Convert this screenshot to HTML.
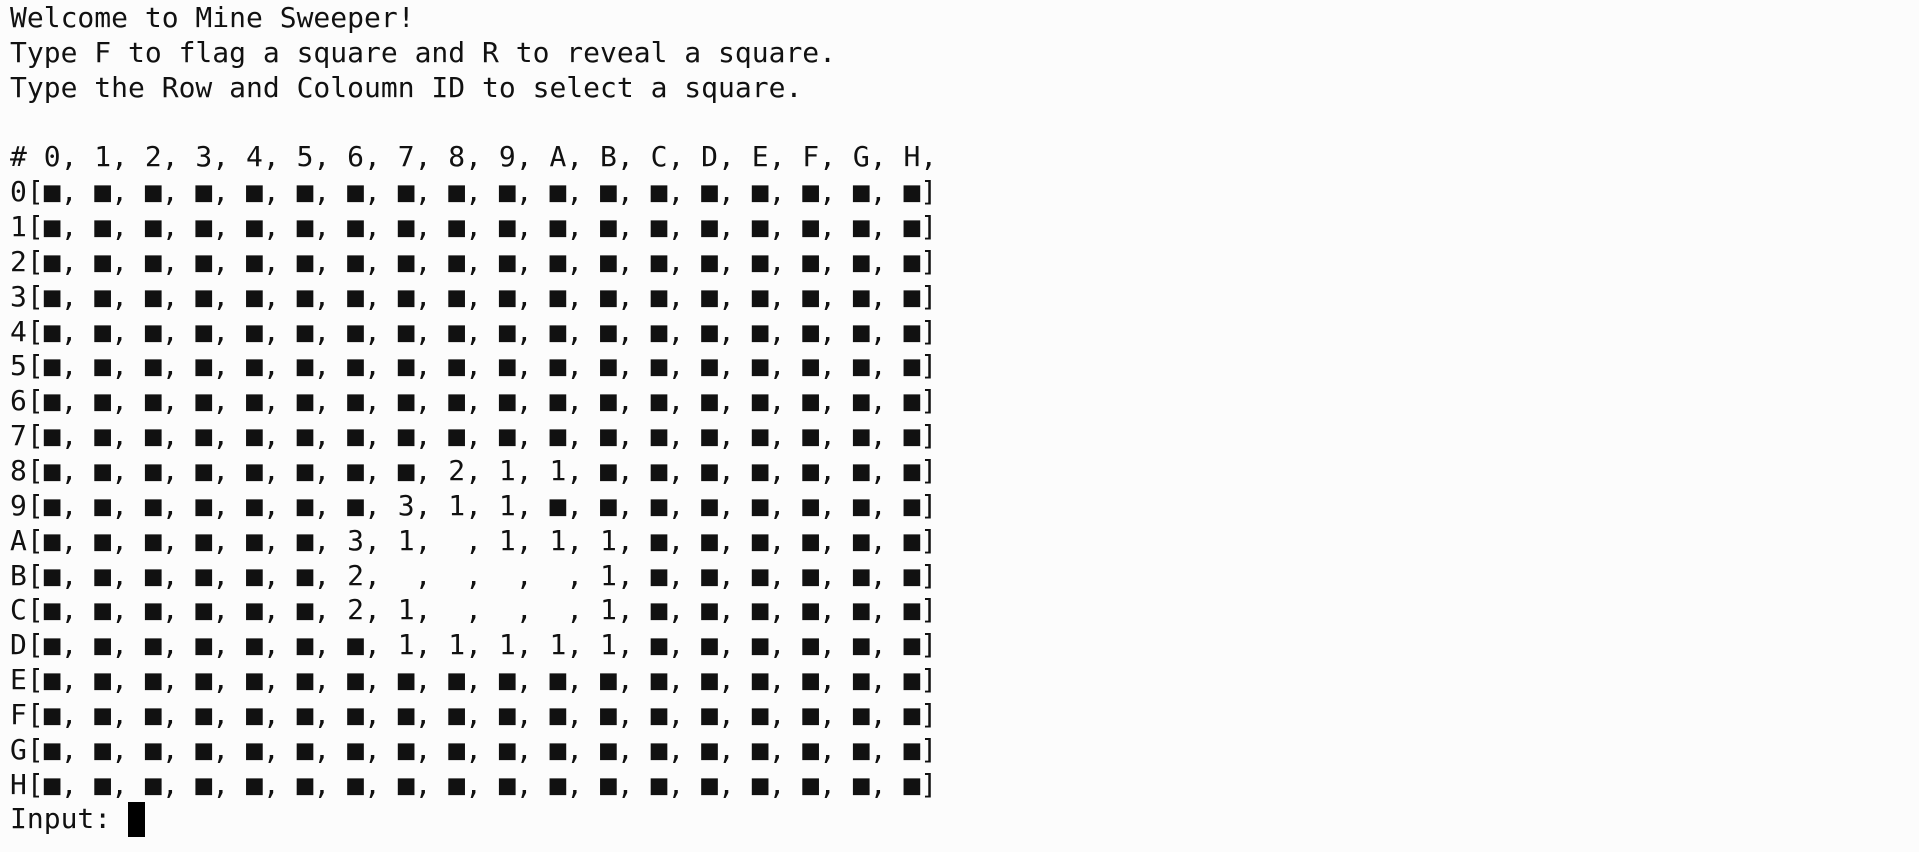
<!DOCTYPE html>
<html><head><meta charset="utf-8"><style>
html,body{margin:0;padding:0;background:#fcfcfc;width:1919px;height:852px;overflow:hidden}
pre{margin:0;padding:1px 0 0 10px;font-family:"DejaVu Sans Mono","Liberation Mono",monospace;font-size:28px;line-height:34.85px;color:#111;white-space:pre}
.cur{display:inline-block;width:17px;height:35px;background:#000;vertical-align:-9px}
</style></head><body><pre>Welcome to Mine Sweeper!
Type F to flag a square and R to reveal a square.
Type the Row and Coloumn ID to select a square.

# 0, 1, 2, 3, 4, 5, 6, 7, 8, 9, A, B, C, D, E, F, G, H,
0[■, ■, ■, ■, ■, ■, ■, ■, ■, ■, ■, ■, ■, ■, ■, ■, ■, ■]
1[■, ■, ■, ■, ■, ■, ■, ■, ■, ■, ■, ■, ■, ■, ■, ■, ■, ■]
2[■, ■, ■, ■, ■, ■, ■, ■, ■, ■, ■, ■, ■, ■, ■, ■, ■, ■]
3[■, ■, ■, ■, ■, ■, ■, ■, ■, ■, ■, ■, ■, ■, ■, ■, ■, ■]
4[■, ■, ■, ■, ■, ■, ■, ■, ■, ■, ■, ■, ■, ■, ■, ■, ■, ■]
5[■, ■, ■, ■, ■, ■, ■, ■, ■, ■, ■, ■, ■, ■, ■, ■, ■, ■]
6[■, ■, ■, ■, ■, ■, ■, ■, ■, ■, ■, ■, ■, ■, ■, ■, ■, ■]
7[■, ■, ■, ■, ■, ■, ■, ■, ■, ■, ■, ■, ■, ■, ■, ■, ■, ■]
8[■, ■, ■, ■, ■, ■, ■, ■, 2, 1, 1, ■, ■, ■, ■, ■, ■, ■]
9[■, ■, ■, ■, ■, ■, ■, 3, 1, 1, ■, ■, ■, ■, ■, ■, ■, ■]
A[■, ■, ■, ■, ■, ■, 3, 1,  , 1, 1, 1, ■, ■, ■, ■, ■, ■]
B[■, ■, ■, ■, ■, ■, 2,  ,  ,  ,  , 1, ■, ■, ■, ■, ■, ■]
C[■, ■, ■, ■, ■, ■, 2, 1,  ,  ,  , 1, ■, ■, ■, ■, ■, ■]
D[■, ■, ■, ■, ■, ■, ■, 1, 1, 1, 1, 1, ■, ■, ■, ■, ■, ■]
E[■, ■, ■, ■, ■, ■, ■, ■, ■, ■, ■, ■, ■, ■, ■, ■, ■, ■]
F[■, ■, ■, ■, ■, ■, ■, ■, ■, ■, ■, ■, ■, ■, ■, ■, ■, ■]
G[■, ■, ■, ■, ■, ■, ■, ■, ■, ■, ■, ■, ■, ■, ■, ■, ■, ■]
H[■, ■, ■, ■, ■, ■, ■, ■, ■, ■, ■, ■, ■, ■, ■, ■, ■, ■]
Input: <span class="cur"></span></pre></body></html>
